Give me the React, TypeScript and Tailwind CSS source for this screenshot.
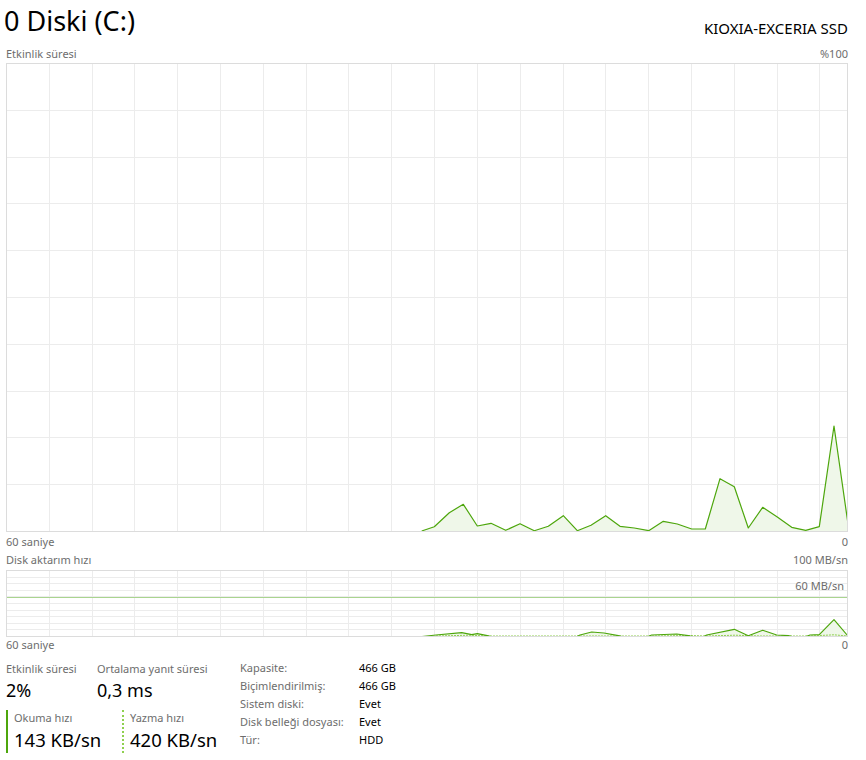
const LINE = "#4da60c";
const FILL = "#eff7e9";
const GRID = "#ececec";
const BORDER = "#dcdcdc";

const W = 842;
const COL = 42.81;

// ölçülen noktalar (sayfa koordinatları)
const aktivite: [number, number][] = [
  [421.7, 531], [434.3, 526.7], [449.3, 512.7], [463.3, 504.3], [477.3, 526],
  [491, 523.3], [505.7, 530.3], [520, 523.7], [534.3, 530.7], [548.3, 526.3],
  [563.3, 515.7], [577.3, 530.7], [591, 525.3], [605.7, 515.7], [620, 526.3],
  [634.3, 528], [648.7, 530.7], [663.3, 521.3], [677.3, 524], [691.7, 529],
  [705.3, 529], [720, 478.7], [734.3, 486.7], [748.3, 528], [762.7, 507.3],
  [777.3, 517], [791.7, 527.3], [805.7, 530.3], [819.3, 526.7], [834, 426],
  [847.7, 521.7],
];

const yazma: [number, number][] = [
  [422, 635.5], [436, 634], [461.7, 631.7], [471.7, 633.7], [477.3, 632.7], [487.3, 634.7],
  [491, 635.5], [577, 635.5], [580, 634], [591.7, 631], [604, 632], [618.3, 634.7],
  [622, 635.5], [648, 635.5], [651.7, 634], [676.7, 633], [688.3, 634.7], [692, 635.5],
  [704, 635.5], [706.7, 634], [734.3, 628.3], [748.3, 634.7], [762.7, 629.3], [776.7, 634],
  [788.3, 634.7], [792, 635.5], [806, 635.5], [810, 634], [819.3, 633.7], [834, 618.7],
  [847.7, 634.7],
];

const okuma: [number, number][] = [
  [436, 635], [470, 634.2], [488, 635], [650, 635], [690, 634.5], [706, 635],
  [735, 634.2], [760, 635], [810, 635], [834, 633.8], [847.7, 635],
];

function yerel(pts: [number, number][], ox: number, oy: number) {
  return pts.map(([x, y]) => `${(x - ox).toFixed(1)},${(y - oy).toFixed(1)}`).join(" ");
}

function Izgara({ h, satir }: { h: number; satir: number }) {
  const dikey = [];
  for (let k = 1; k < 20; k++) {
    const x = Math.round(k * COL) + 0.5;
    dikey.push(<line key={"v" + k} x1={x} y1={0} x2={x} y2={h} stroke={GRID} />);
  }
  const yatay = [];
  for (let k = 1; k < satir; k++) {
    const y = Math.round((k * (h - 1)) / satir) + 0.5;
    yatay.push(<line key={"h" + k} x1={0} y1={y} x2={W} y2={y} stroke={GRID} />);
  }
  return (
    <g shapeRendering="crispEdges">
      {dikey}
      {yatay}
    </g>
  );
}

function Grafik1() {
  const h = 469;
  const cizgi = yerel(aktivite, 6, 63);
  const alan = `${(aktivite[0][0] - 6).toFixed(1)},${h - 1} ${cizgi} ${(aktivite[aktivite.length - 1][0] - 6).toFixed(1)},${h - 1}`;
  return (
    <svg width={W} height={h} className="block">
      <Izgara h={h} satir={10} />
      <polygon points={alan} fill={FILL} />
      <polyline points={cizgi} fill="none" stroke={LINE} strokeWidth={1.2} strokeLinejoin="round" />
      <rect x={0.5} y={0.5} width={W - 1} height={h - 1} fill="none" stroke={BORDER} shapeRendering="crispEdges" />
    </svg>
  );
}

function Grafik2() {
  const h = 67;
  const cizgi = yerel(yazma, 6, 569);
  const alan = `${(yazma[0][0] - 6).toFixed(1)},${h - 1} ${cizgi} ${(yazma[yazma.length - 1][0] - 6).toFixed(1)},${h - 1}`;
  return (
    <div className="relative">
      <svg width={W} height={h} className="block">
        <Izgara h={h} satir={10} />
        <line x1={0} y1={27.5} x2={W} y2={27.5} stroke="#a9d48f" shapeRendering="crispEdges" />
        <polygon points={alan} fill={FILL} />
        <polyline points={yerel(okuma, 6, 569)} fill="none" stroke="#8fd04f" strokeWidth={1} strokeDasharray="2 1" />
        <polyline points={cizgi} fill="none" stroke={LINE} strokeWidth={1.2} strokeLinejoin="round" />
        <rect x={0.5} y={0.5} width={W - 1} height={h - 1} fill="none" stroke={BORDER} shapeRendering="crispEdges" />
      </svg>
      <span className="absolute right-[4px] top-[9px] text-[11px] leading-[14px] text-[#6d6d6d]">60 MB/sn</span>
    </div>
  );
}

function Etiket({ sol, sag }: { sol: string; sag: string }) {
  return (
    <div className="flex justify-between text-[11px] leading-[14px] text-[#6d6d6d]">
      <span>{sol}</span>
      <span>{sag}</span>
    </div>
  );
}

const ozellikler: [string, string][] = [
  ["Kapasite:", "466 GB"],
  ["Biçimlendirilmiş:", "466 GB"],
  ["Sistem diski:", "Evet"],
  ["Disk belleği dosyası:", "Evet"],
  ["Tür:", "HDD"],
];

export default function App() {
  return (
    <div
      className="w-[866px] h-[760px] overflow-hidden bg-white pl-[6px] text-black"
      style={{ fontFamily: '"Noto Sans", "Open Sans", sans-serif' }}
    >
      <div className="w-[842px]">
        <div className="flex justify-between items-end h-[47px] pb-[9px]">
          <span className="text-[27px] leading-[34px] -ml-[2px]">0 Diski (C:)</span>
          <span className="text-[15px] leading-[20px]">KIOXIA-EXCERIA SSD</span>
        </div>
        <div className="h-[16px]">
          <Etiket sol="Etkinlik süresi" sag="%100" />
        </div>
        <Grafik1 />
        <div className="h-[21px] pt-[3px]">
          <Etiket sol="60 saniye" sag="0" />
        </div>
        <div className="h-[17px]">
          <Etiket sol="Disk aktarım hızı" sag="100 MB/sn" />
        </div>
        <Grafik2 />
        <div className="h-[20px] pt-[1px]">
          <Etiket sol="60 saniye" sag="0" />
        </div>

        <div className="flex pt-[4px]">
          <div className="w-[234px]">
            <div className="flex">
              <div className="w-[91px]">
                <div className="text-[11px] leading-[16px] text-[#6d6d6d]">Etkinlik süresi</div>
                <div className="text-[18px] leading-[26px]">2%</div>
              </div>
              <div>
                <div className="text-[11px] leading-[16px] text-[#6d6d6d]">Ortalama yanıt süresi</div>
                <div className="text-[18px] leading-[26px]">0,3 ms</div>
              </div>
            </div>
            <div className="flex mt-[7px]">
              <div className="w-[116px] border-l-2 border-[#4da60c] pl-[6px]">
                <div className="text-[11px] leading-[16px] text-[#6d6d6d]">Okuma hızı</div>
                <div className="text-[18.5px] leading-[27px]">143 KB/sn</div>
              </div>
              <div className="border-l-2 border-dotted border-[#8fd04f] pl-[6px]">
                <div className="text-[11px] leading-[16px] text-[#6d6d6d]">Yazma hızı</div>
                <div className="text-[18.5px] leading-[27px]">420 KB/sn</div>
              </div>
            </div>
          </div>
          <div className="grid grid-cols-[119px_auto] grid-rows-[repeat(5,18px)] text-[11px] leading-[18px] -mt-[2px]">
            {ozellikler.map(([k, v]) => (
              <div key={k} className="contents">
                <span className="block h-[18px] text-[#6d6d6d]">{k}</span>
                <span className="block h-[18px]">{v}</span>
              </div>
            ))}
          </div>
        </div>
      </div>
    </div>
  );
}
